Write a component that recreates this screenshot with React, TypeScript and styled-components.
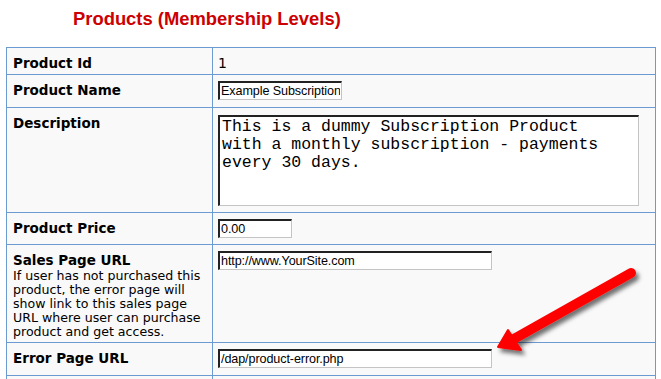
import styled, { createGlobalStyle } from 'styled-components';

const GlobalStyle = createGlobalStyle`
    html, body{
        margin: 0;
        padding: 0;
        background: #ffffff;
    }
    body{
        font-family: "DejaVu Sans", Verdana, sans-serif;
        color: #000;
    }
`;

const rows = [
    { label: 'Product Id', height: 27, kind: 'text', value: '1' },
    { label: 'Product Name', height: 33, kind: 'input', value: 'Example Subscription', width: 124 },
    { label: 'Description', height: 105, kind: 'area', value: 'This is a dummy Subscription Product\nwith a monthly subscription - payments\nevery 30 days.' },
    { label: 'Product Price', height: 32, kind: 'input', value: '0.00', width: 74 },
    {
        label: 'Sales Page URL', height: 98, kind: 'input', value: 'http://www.YourSite.com', width: 274,
        help: ['If user has not purchased this', 'product, the error page will', 'show link to this sales page', 'URL where user can purchase', 'product and get access.'],
    },
    { label: 'Error Page URL', height: 33, kind: 'input', value: '/dap/product-error.php', width: 274 },
    { label: '', height: 20, kind: 'text', value: '' },
];

export default function App() {
    return (
        <Page>
            <GlobalStyle />
            <Title>Products (Membership Levels)</Title>
            <Sheet>
                <colgroup>
                    <col style={{ width: 206 }} />
                    <col />
                </colgroup>
                <tbody>
                    {rows.map((row, i) => (
                        <Row key={i} $h={row.height}>
                            <Label>
                                <strong>{row.label}</strong>
                                {row.help && row.help.map((line) => <Help key={line}>{line}</Help>)}
                            </Label>
                            <Value>
                                {row.kind === 'text' && <Plain>{row.value}</Plain>}
                                {row.kind === 'input' && <Field readOnly value={row.value} $w={row.width ?? 120} />}
                                {row.kind === 'area' && <Area readOnly value={row.value} />}
                            </Value>
                        </Row>
                    ))}
                </tbody>
            </Sheet>
            <Arrow width="661" height="379" viewBox="0 0 661 379">
                <defs>
                    <filter id="shade" x="-20%" y="-20%" width="140%" height="140%">
                        <feDropShadow dx="3" dy="4" stdDeviation="2.2" floodColor="#000" floodOpacity="0.55" />
                    </filter>
                </defs>
                <g filter="url(#shade)" fill="#ff0000" stroke="#ff0000">
                    <line x1="631" y1="273" x2="512" y2="340" strokeWidth="10" strokeLinecap="round" />
                    <polygon points="498,347 508,330 521,350" strokeWidth="2" strokeLinejoin="round" />
                </g>
            </Arrow>
        </Page>
    );
}

const Page = styled.div`
    position: relative;
    width: 661px;
    height: 379px;
    overflow: hidden;
`;

const Title = styled.h1`
    margin: 0;
    height: 47px;
    padding-left: 73px;
    box-sizing: border-box;
    padding-top: 8px;
    font-family: "Liberation Sans", Arial, sans-serif;
    font-size: 18.4px;
    line-height: 21px;
    font-weight: bold;
    color: #cc0000;
`;

const Sheet = styled.table`
    margin-left: 6px;
    width: 650px;
    table-layout: fixed;
    border-collapse: collapse;
    border: 1px solid #6b9bd1;
`;

const Row = styled.tr<{ $h: number }>`
    height: ${({ $h }) => $h}px;
    td{
        border: 1px solid #6b9bd1;
        background: #f9f9f9;
        vertical-align: top;
    }
`;

const Label = styled.td`
    padding: 7px 4px 0 6px;
    font-size: 13.5px;
    line-height: 17px;
    white-space: nowrap;
    overflow: hidden;
    strong{
        display: block;
        font-weight: bold;
    }
`;

const Help = styled.div`
    font-size: 12.6px;
    line-height: 14px;
    font-weight: normal;
`;

const Value = styled.td`
    padding: 6px 0 0 5px;
`;

const Plain = styled.div`
    font-size: 14px;
    line-height: 18px;
`;

const Field = styled.input<{ $w: number }>`
    display: block;
    box-sizing: border-box;
    width: ${({ $w }) => $w}px;
    height: 19px;
    margin: 0;
    padding: 0 1px;
    background: #fff;
    border-style: solid;
    border-width: 2px 1px 1px 2px;
    border-color: #222 #c4c4c4 #c4c4c4 #222;
    font-family: "Liberation Sans", Arial, sans-serif;
    font-size: 12.6px;
    letter-spacing: -0.1px;
    color: #000;
    outline: none;
`;

const Area = styled.textarea`
    display: block;
    box-sizing: border-box;
    width: 421px;
    height: 91px;
    margin: 1px 0 0 0;
    padding: 1px 2px;
    resize: none;
    background: #fff;
    border-style: solid;
    border-width: 2px 1px 1px 2px;
    border-color: #222 #c4c4c4 #c4c4c4 #222;
    font-family: "Liberation Mono", "Courier New", monospace;
    font-size: 16.5px;
    line-height: 18px;
    color: #000;
    outline: none;
    overflow: hidden;
`;

const Arrow = styled.svg`
    position: absolute;
    left: 0;
    top: 0;
    pointer-events: none;
`;
